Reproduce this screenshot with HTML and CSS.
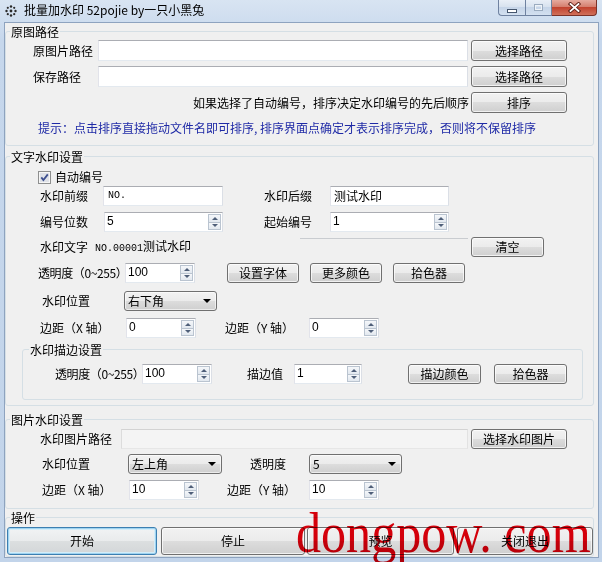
FILE: index.html
```html
<!DOCTYPE html>
<html lang="zh-CN">
<head>
<meta charset="utf-8">
<title>批量加水印 52pojie by一只小黑兔</title>
<link rel="stylesheet" href="styles.css">
</head>
<body>
<div class="window">
  <header class="titlebar">
    <svg class="app-icon" width="12" height="12" viewBox="0 0 12 12">
      <g fill="#2a2a2a">
        <circle cx="6" cy="6" r="1.4"/>
        <circle cx="6" cy="1.5" r="1.2"/>
        <circle cx="6" cy="10.5" r="1.2"/>
        <circle cx="1.5" cy="6" r="1.2"/>
        <circle cx="10.5" cy="6" r="1.2"/>
        <circle cx="2.8" cy="2.8" r="1.1"/>
        <circle cx="9.2" cy="2.8" r="1.1"/>
        <circle cx="2.8" cy="9.2" r="1.1"/>
        <circle cx="9.2" cy="9.2" r="1.1"/>
      </g>
    </svg>
    <span class="title">批量加水印 52pojie by一只小黑兔</span>
    <div class="controls">
      <div class="ctl ctl-min"><span class="g-min"></span></div>
      <div class="ctl ctl-max"><span class="g-max"></span></div>
      <div class="ctl ctl-close">
        <svg width="13" height="11" viewBox="0 0 13 11">
          <path d="M2.5 2 L10.5 9 M10.5 2 L2.5 9" stroke="#5a1d14" stroke-width="3.6" stroke-linecap="square" fill="none"/>
          <path d="M2.5 2 L10.5 9 M10.5 2 L2.5 9" stroke="#ffffff" stroke-width="1.8" stroke-linecap="square" fill="none"/>
        </svg>
      </div>
    </div>
  </header>

  <main class="client">
    <section class="group g-src">
      <div class="group-title">原图路径</div>
      <div class="row row-src first">
        <span class="lbl w65">原图片路径</span>
        <div class="tb w370"></div>
        <button class="btn w96 ml3">选择路径</button>
      </div>
      <div class="row row-src">
        <span class="lbl w65">保存路径</span>
        <div class="tb w370"></div>
        <button class="btn w96 ml3">选择路径</button>
      </div>
      <div class="row row-sort">
        <span class="lbl">如果选择了自动编号，排序决定水印编号的先后顺序</span>
        <button class="btn w96">排序</button>
      </div>
      <div class="row row-tip">
        <span class="lbl tip">提示：点击排序直接拖动文件名即可排序, 排序界面点确定才表示排序完成，否则将不保留排序</span>
      </div>
    </section>

    <section class="group g-text">
      <div class="group-title">文字水印设置</div>
      <div class="row row-check">
        <svg class="chk" width="13" height="13" viewBox="0 0 13 13">
          <rect x="0.5" y="0.5" width="12" height="12" fill="#f6f6f6" stroke="#8e8f8f"/>
          <rect x="2" y="2" width="9" height="9" fill="#dfe2e8"/>
          <path d="M3.3 6.4 L5.4 9 L9.8 3.4" stroke="#3d4f8f" stroke-width="1.8" fill="none"/>
        </svg>
        <span class="lbl ml4">自动编号</span>
      </div>
      <div class="row row-prefix">
        <span class="lbl w63">水印前缀</span>
        <div class="tb w120 pl4"><span class="mono">NO.</span></div>
        <span class="lbl w66 ml41">水印后缀</span>
        <div class="tb w119">测试水印</div>
      </div>
      <div class="row row-digits">
        <span class="lbl w64">编号位数</span>
        <div class="spin w119"><span class="spin-val">5</span><span class="spin-btns"><i class="up"></i><i class="dn"></i></span></div>
        <span class="lbl w66 ml41">起始编号</span>
        <div class="spin w119"><span class="spin-val">1</span><span class="spin-btns"><i class="up"></i><i class="dn"></i></span></div>
      </div>
      <div class="row row-text">
        <span class="lbl w55">水印文字</span>
        <span class="lbl"><span class="mono">NO.00001</span>测试水印</span>
        <span class="rule"></span>
        <button class="btn w73 ml3">清空</button>
      </div>
      <div class="row row-opac">
        <span class="lbl w87 tight">透明度（0~255）</span>
        <div class="spin w70"><span class="spin-val">100</span><span class="spin-btns"><i class="up"></i><i class="dn"></i></span></div>
        <button class="btn w72 ml32">设置字体</button>
        <button class="btn w72 ml11">更多颜色</button>
        <button class="btn w72 ml11">拾色器</button>
      </div>
      <div class="row row-pos">
        <span class="lbl w82">水印位置</span>
        <div class="combo w93"><span>右下角</span></div>
      </div>
      <div class="row row-margin">
        <span class="lbl w86">边距（X 轴）</span>
        <div class="spin w70"><span class="spin-val">0</span><span class="spin-btns"><i class="up"></i><i class="dn"></i></span></div>
        <span class="lbl w84 ml29">边距（Y 轴）</span>
        <div class="spin w70"><span class="spin-val">0</span><span class="spin-btns"><i class="up"></i><i class="dn"></i></span></div>
      </div>
      <section class="subgroup">
        <div class="group-title sub-title">水印描边设置</div>
        <div class="row row-stroke">
          <span class="lbl w87 tight">透明度（0~255）</span>
          <div class="spin w70"><span class="spin-val">100</span><span class="spin-btns"><i class="up"></i><i class="dn"></i></span></div>
          <span class="lbl w47 ml35">描边值</span>
          <div class="spin w68"><span class="spin-val">1</span><span class="spin-btns"><i class="up"></i><i class="dn"></i></span></div>
          <button class="btn w73 ml46">描边颜色</button>
          <button class="btn w73 ml13">拾色器</button>
        </div>
      </section>
    </section>

    <section class="group g-img">
      <div class="group-title">图片水印设置</div>
      <div class="row row-imgpath">
        <span class="lbl w81">水印图片路径</span>
        <div class="tb tb-off w347"></div>
        <button class="btn w96 ml3">选择水印图片</button>
      </div>
      <div class="row row-imgpos">
        <span class="lbl w86">水印位置</span>
        <div class="combo w94"><span>左上角</span></div>
        <span class="lbl w59 ml28">透明度</span>
        <div class="combo w93"><span>5</span></div>
      </div>
      <div class="row row-imgmargin">
        <span class="lbl w87">边距（X 轴）</span>
        <div class="spin w70"><span class="spin-val">10</span><span class="spin-btns"><i class="up"></i><i class="dn"></i></span></div>
        <span class="lbl w82 ml28">边距（Y 轴）</span>
        <div class="spin w70"><span class="spin-val">10</span><span class="spin-btns"><i class="up"></i><i class="dn"></i></span></div>
      </div>
    </section>

    <section class="group g-ops">
      <div class="group-title">操作</div>
      <div class="row row-ops">
        <button class="btn btn-default w150">开始</button>
        <button class="btn w144 ml4">停止</button>
        <button class="btn w147 ml2">预览</button>
        <button class="btn w136 ml3">关闭退出</button>
      </div>
    </section>
  </main>

  <div class="site-mark">dongpow. com</div>
</div>
</body>
</html>
```

FILE: styles.css
```css
html, body {
  margin: 0;
  padding: 0;
}

body {
  background: #c4d6ec;
  font-family: "Noto Sans CJK SC", "Noto Sans", sans-serif;
  font-size: 12px;
  color: #000;
}

.window {
  position: relative;
  width: 602px;
  height: 562px;
  overflow: hidden;
  display: flex;
  flex-direction: column;
  background: linear-gradient(#d8e4f2, #c6d7ec 40px, #c2d4ea);
}

/* ---------- title bar ---------- */
.titlebar {
  flex: none;
  height: 22px;
  display: flex;
  align-items: center;
  padding: 0 5px 0 5px;
  box-sizing: border-box;
}

.app-icon {
  flex: none;
  margin-top: -1px;
}

.title {
  margin-left: 7px;
  line-height: 14px;
  margin-top: -2px;
  white-space: nowrap;
}

.controls {
  margin-left: auto;
  align-self: flex-start;
  display: flex;
  height: 16px;
}

.ctl {
  box-sizing: border-box;
  height: 16px;
  border: 1px solid #6f82a0;
  border-top: none;
  display: flex;
  align-items: center;
  justify-content: center;
}

.ctl-min {
  width: 27px;
  border-right: none;
  border-radius: 0 0 0 4px;
  background: linear-gradient(#e9eff7, #d6e1ee 50%, #c6d5e8 50%, #d3e0f0);
}

.ctl-max {
  width: 27px;
  background: linear-gradient(#e9eff7, #d6e1ee 50%, #c6d5e8 50%, #d3e0f0);
}

.ctl-close {
  width: 45px;
  border-left: none;
  border-color: #7b3228;
  border-radius: 0 0 4px 0;
  background: linear-gradient(#e6ab9f, #d37a69 50%, #c2432f 50%, #d0705a);
}

.g-min {
  width: 8px;
  height: 2px;
  background: #fff;
  border: 1px solid #45566e;
  margin-top: 6px;
}

.g-max {
  width: 7px;
  height: 5px;
  border: 1px solid #9aabbf;
  box-shadow: inset 0 0 0 1px #eef3f8;
}

/* ---------- client area ---------- */
.client {
  flex: 1;
  margin: 0 3px 4px 4px;
  border: 1px solid #8ea3bf;
  background: #f0f0f0;
  display: flex;
  flex-direction: column;
  min-height: 0;
}

.group {
  box-sizing: border-box;
  margin-right: 4px;
  border: 1px solid #d5dfe5;
  border-radius: 3px;
  flex: none;
}

.group-title {
  width: fit-content;
  height: 13px;
  line-height: 13px;
  margin: -7px 0 0 4px;
  padding: 0 1px;
  background: #f0f0f0;
  white-space: nowrap;
}

.g-src  { margin-top: 8px;  height: 115px; }
.g-text { margin-top: 10px; height: 250px; }
.g-img  { margin-top: 13px; height: 90px; }
.g-ops  { margin-top: 8px;  height: 40px; }

.subgroup {
  box-sizing: border-box;
  height: 51px;
  margin: 11px 10px 0 16px;
  border: 1px solid #d5dfe5;
  border-radius: 3px;
}

.sub-title {
  margin-left: 6px;
}

/* ---------- rows ---------- */
.row {
  display: flex;
  align-items: center;
}

.row > * {
  flex-shrink: 0;
}

.row-src { height: 21px; margin-top: 5px; padding-left: 27px; }
.row-src.first { margin-top: 2px; }
.row-sort { height: 21px; margin-top: 5px; justify-content: flex-end; padding-right: 26px; }
.row-sort .lbl { margin-right: 2px; }
.row-tip { height: 21px; margin-top: 4px; padding-left: 32px; }

.row-check { height: 18px; margin-top: 5px; padding-left: 32px; }
.row-prefix { height: 20px; padding-left: 34px; }
.row-digits { height: 20px; margin-top: 6px; padding-left: 34px; }
.row-text { height: 20px; margin-top: 5px; padding-left: 34px; padding-right: 49px; }
.row-opac { height: 20px; margin-top: 6px; padding-left: 32px; }
.row-pos { height: 20px; margin-top: 8px; padding-left: 36px; }
.row-margin { height: 20px; margin-top: 7px; padding-left: 34px; }
.row-stroke { height: 20px; margin-top: 8px; padding-left: 32px; }

.row-imgpath { height: 20px; margin-top: 3px; padding-left: 34px; }
.row-imgpos { height: 20px; margin-top: 5px; padding-left: 36px; }
.row-imgmargin { height: 20px; margin-top: 6px; padding-left: 36px; }

.row-ops { height: 28px; margin-top: 3px; padding-left: 1px; }

/* ---------- text ---------- */
.lbl {
  white-space: nowrap;
  line-height: 14px;
}

.tight {
  letter-spacing: -0.4px;
}

.tip {
  color: #1f2aa6;
}

.mono {
  font-family: "Liberation Mono", "DejaVu Sans Mono", monospace;
  font-size: 10px;
}

.rule {
  width: 168px;
  margin-left: auto;
  align-self: flex-start;
  margin-top: 1px;
  border-top: 1px solid #c9ccd0;
}

/* ---------- controls ---------- */
.tb {
  box-sizing: border-box;
  height: 100%;
  display: flex;
  align-items: center;
  padding: 0 3px;
  background: #fff;
  border: 1px solid;
  border-color: #abadb3 #dbdfe6 #e3e9ef #e2e3ea;
  line-height: 14px;
  white-space: nowrap;
}

.tb-off {
  background: #f4f4f4;
  border-color: #d3d3d3 #e2e2e2 #e6e6e6 #dcdcdc;
}

.pl4 {
  padding-left: 4px;
}

.spin {
  box-sizing: border-box;
  height: 100%;
  display: flex;
  background: #fff;
  border: 1px solid;
  border-color: #abadb3 #dbdfe6 #e3e9ef #e2e3ea;
}

.spin-val {
  flex: 1;
  font-family: "Liberation Sans", Arial, sans-serif;
  font-size: 12px;
  line-height: 14px;
  padding: 1px 0 0 2px;
}

.spin-btns {
  width: 13px;
  display: flex;
  flex-direction: column;
  padding: 1px 1px 1px 0;
}

.spin-btns i {
  flex: 1;
  display: flex;
  align-items: center;
  justify-content: center;
  border: 1px solid #bac4d0;
  background: linear-gradient(#f5f7fa, #e2e8ef);
}

.spin-btns i.up {
  border-bottom: none;
}

.spin-btns i::before {
  content: "";
  border-left: 3px solid transparent;
  border-right: 3px solid transparent;
}

.spin-btns i.up::before {
  border-bottom: 3px solid #4f5f79;
}

.spin-btns i.dn::before {
  border-top: 3px solid #4f5f79;
}

.combo {
  box-sizing: border-box;
  height: 100%;
  display: flex;
  align-items: center;
  padding: 0 5px 0 3px;
  border: 1px solid #707070;
  border-radius: 3px;
  background: linear-gradient(#f2f2f2, #ebebeb 50%, #dddddd 50%, #cfcfcf);
  box-shadow: inset 0 0 0 1px rgba(255, 255, 255, 0.6);
  line-height: 14px;
}

.combo span {
  flex: 1;
}

.combo::after {
  content: "";
  border-left: 4px solid transparent;
  border-right: 4px solid transparent;
  border-top: 4px solid #000;
}

.btn {
  box-sizing: border-box;
  height: 100%;
  padding: 0;
  margin: 0;
  font-family: inherit;
  font-size: 12px;
  line-height: 14px;
  color: #000;
  border: 1px solid #707070;
  border-radius: 3px;
  background: linear-gradient(#f2f2f2, #ebebeb 50%, #dddddd 50%, #cfcfcf);
  box-shadow: inset 0 0 0 1px rgba(255, 255, 255, 0.7);
  white-space: nowrap;
}

.btn-default {
  border-color: #3c7fb1;
  box-shadow: inset 0 0 0 1px #9fd3f0, inset 0 0 0 2px #d4edf9;
  background: linear-gradient(#f1f3f4, #e9ebec 50%, #dcdfe0 50%, #d3d6d8);
}

.chk {
  flex: none;
  margin-top: 1px;
}

/* ---------- widths & spacing ---------- */
.w47 { width: 47px; }
.w55 { width: 55px; }
.w59 { width: 59px; }
.w63 { width: 63px; }
.w64 { width: 64px; }
.w65 { width: 65px; }
.w66 { width: 66px; }
.w68 { width: 68px; }
.w70 { width: 70px; }
.w72 { width: 72px; }
.w73 { width: 73px; }
.w81 { width: 81px; }
.w82 { width: 82px; }
.w84 { width: 84px; }
.w86 { width: 86px; }
.w87 { width: 87px; }
.w93 { width: 93px; }
.w94 { width: 94px; }
.w96 { width: 96px; }
.w119 { width: 119px; }
.w120 { width: 120px; }
.w136 { width: 136px; }
.w144 { width: 144px; }
.w147 { width: 147px; }
.w150 { width: 150px; }
.w347 { width: 347px; }
.w370 { width: 370px; }

.ml2 { margin-left: 2px; }
.ml3 { margin-left: 3px; }
.ml4 { margin-left: 4px; }
.ml11 { margin-left: 11px; }
.ml13 { margin-left: 13px; }
.ml28 { margin-left: 28px; }
.ml29 { margin-left: 29px; }
.ml32 { margin-left: 32px; }
.ml35 { margin-left: 35px; }
.ml41 { margin-left: 41px; }
.ml46 { margin-left: 46px; }

/* ---------- site watermark overlay ---------- */
.site-mark {
  position: absolute;
  left: 296px;
  top: 505px;
  font-family: "Liberation Serif", "Times New Roman", serif;
  font-size: 56px;
  line-height: 1;
  color: #e3000b;
  white-space: nowrap;
  transform: scaleX(0.895);
  transform-origin: left top;
  mix-blend-mode: multiply;
  pointer-events: none;
}
```
